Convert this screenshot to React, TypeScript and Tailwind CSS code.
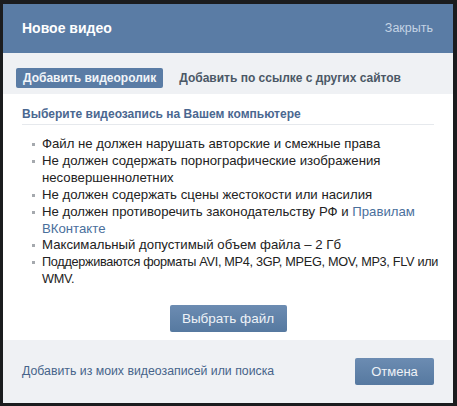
const rules: { lines: string[]; link?: string; tight?: boolean }[] = [
  { lines: ["Файл не должен нарушать авторские и смежные права"] },
  { lines: ["Не должен содержать порнографические изображения", "несовершеннолетних"] },
  { lines: ["Не должен содержать сцены жестокости или насилия"] },
  { lines: ["Не должен противоречить законодательству РФ и "], link: "Правилам" },
  { lines: ["Максимальный допустимый объем файла – 2 Гб"] },
  { lines: ["Поддерживаются форматы AVI, MP4, 3GP, MPEG, MOV, MP3, FLV или", "WMV."], tight: true },
];

export default function App() {
  return (
    <div className="w-[457px] h-[406px] bg-[#1b1c1e] pt-[4px] pl-[3px] font-['Liberation_Sans',Arial,sans-serif] overflow-hidden">
      <div className="w-[450px] h-[399px] flex flex-col">
        <div className="h-[49px] bg-[#5a7ca5] flex items-center justify-between pl-[19px] pr-[20px]">
          <span className="text-[14px] font-bold text-white">Новое видео</span>
          <span className="text-[12.5px] text-[#c4d3e4]">Закрыть</span>
        </div>

        <div className="h-[41px] bg-[#eff1f4] flex items-start pt-[15px] pl-[13px] gap-[16px]">
          <button className="h-[20px] px-[7px] bg-[#5a7ca5] rounded-[2px] text-[12px] font-bold text-[#f2f5f9] leading-[20px]">
            Добавить видеоролик
          </button>
          <span className="text-[12px] font-bold text-[#4b5866] leading-[20px]">Добавить по ссылке с других сайтов</span>
        </div>

        <div className="flex-1 bg-white px-[19px] pt-[13px] flex flex-col">
          <div className="text-[12px] leading-[15px] font-bold text-[#4a6790] pb-[2px] border-b border-[#e6e9ed]">
            Выберите видеозапись на Вашем компьютере
          </div>
          <ul className="mt-[11px] pl-[10px] flex flex-col">
            {rules.map((r, i) => (
              <li key={i} className="flex text-[13.2px] leading-[16.9px] text-[#222]">
                <span className="w-[3px] h-[3px] bg-[#a5a9ae] mt-[7px] mr-[7px] shrink-0" />
                <span className={r.tight ? "whitespace-nowrap text-[12.7px] tracking-[-0.3px]" : "whitespace-nowrap"}>
                  {r.lines.map((l, j) => (
                    <span key={j} className="block">
                      {l}
                      {r.link && <span className="text-[#4a6f9c]">{r.link}</span>}
                    </span>
                  ))}
                  {r.link && <span className="block text-[#4a6f9c]">ВКонтакте</span>}
                </span>
              </li>
            ))}
          </ul>
          <div className="flex justify-center mt-[17px]">
            <button className="w-[117px] h-[27px] rounded-[2px] bg-gradient-to-b from-[#6c8cb2] to-[#5679a0] text-[13.5px] text-[#eef2f7]">
              Выбрать файл
            </button>
          </div>
        </div>

        <div className="h-[63px] bg-[#eff1f4] flex items-center justify-between pl-[19px] pr-[19px]">
          <span className="text-[12.3px] text-[#46648a]">Добавить из моих видеозаписей или поиска</span>
          <button className="w-[79px] h-[27px] rounded-[2px] bg-gradient-to-b from-[#6c8cb2] to-[#5679a0] text-[13px] text-[#eef2f7]">
            Отмена
          </button>
        </div>
      </div>
    </div>
  );
}
